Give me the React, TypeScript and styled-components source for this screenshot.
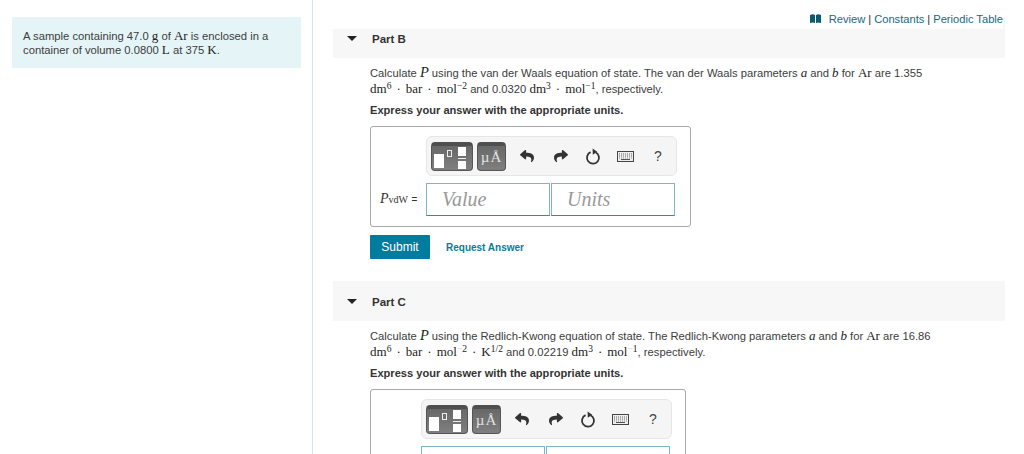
import React from 'react';
import styled, { createGlobalStyle } from 'styled-components';
import { FaReply, FaShare } from 'react-icons/fa';

const GlobalStyle = createGlobalStyle`
  html, body {
    margin: 0;
    height: 100%;
    overflow: hidden;
    background: #fff;
  }
  body {
    font-family: "Liberation Sans", Arial, sans-serif;
    font-size: 11px;
    color: #333;
  }
`;

const Page = styled.div`
  display: flex;
  width: 1024px;
  height: 454px;
  overflow: hidden;
`;

const Sidebar = styled.aside`
  width: 313px;
  height: 100%;
  flex: none;
  box-sizing: border-box;
  padding: 17px 11px 0 12px;
  border-right: 1px solid #d6e4f2;
`;

const InfoBox = styled.div`
  height: 51px;
  box-sizing: border-box;
  padding: 12px 11px;
  background: #e5f4f6;
  font-size: 11.25px;
  line-height: 14px;
  color: #3c3c3c;
`;

const Main = styled.main`
  flex: 1;
  min-width: 0;
  box-sizing: border-box;
  padding: 18px 19px 0 20px;
  position: relative;
`;

const TopLinks = styled.div`
  position: absolute;
  top: 0;
  left: 0;
  right: 21px;
  height: 29px;
  box-sizing: border-box;
  padding-top: 8px;
  background: #fff;
  display: flex;
  justify-content: flex-end;
  align-items: center;
  gap: 3px;
  font-size: 11.15px;
  line-height: 14px;
  color: #333;
`;

const BookIcon = styled.svg`
  width: 11px;
  height: 9px;
  margin-right: 5px;
  color: #0b5a70;
`;

const TopLink = styled.a`
  color: #17697f;
`;

const PartHeader = styled.div`
  height: 40px;
  background: #f7f7f7;
  display: flex;
  align-items: center;
  padding-left: 14px;
  gap: 14px;
`;

const Caret = styled.span`
  width: 0;
  height: 0;
  border-left: 5px solid transparent;
  border-right: 5px solid transparent;
  border-top: 5px solid #222;
`;

const PartTitle = styled.h3`
  margin: 2px 0 0 1px;
  font-size: 11.5px;
  font-weight: 700;
  color: #333;
`;

const PartBody = styled.section`
  padding: 7px 0 0 37px;
`;

const Prompt = styled.p<{ $after?: number }>`
  margin: 0 0 ${p => p.$after ?? 0}px;
  font-size: 11.22px;
  line-height: 16px;
  color: #3c3c3c;
`;

const Instruction = styled.p`
  margin: 6px 0 8px;
  font-size: 11.1px;
  line-height: 15px;
  font-weight: 700;
  color: #333;
`;

const M = styled.span`
  font-family: "Liberation Serif", "Times New Roman", serif;
  font-size: 13px;
  line-height: 0;
  color: #222;
`;

const Mi = styled(M)`
  font-style: italic;
`;

const BigVar = styled(Mi)`
  font-size: 14.5px;
`;

const Dot = styled.span`
  margin: 0 5px;
`;

const Sup = styled.sup`
  font-size: 9.5px;
  line-height: 0;
  vertical-align: 4px;
`;

const FaintMinus = styled.span`
  color: #ccc;
`;

const AnswerBox = styled.div<{ $w: number; $left: number }>`
  width: ${p => p.$w}px;
  box-sizing: border-box;
  border: 1px solid #aaa;
  border-radius: 3px;
  padding: 9px 14px 10px ${p => p.$left}px;
  background: #fff;
`;

const Toolbar = styled.div`
  width: 251px;
  height: 40px;
  box-sizing: border-box;
  display: flex;
  align-items: center;
  padding-left: 4px;
  background: #f5f5f5;
  border: 1px solid #e6e6e6;
  border-radius: 6px;
`;

const ToolButton = styled.div<{ $w: number }>`
  width: ${p => p.$w}px;
  height: 29px;
  flex: none;
  margin-right: 4px;
  box-sizing: border-box;
  border-radius: 4px;
  border: 1px solid #555;
  border-top: 4px solid #4f4f4f;
  background: linear-gradient(#686868, #7f7f7f);
  display: flex;
  align-items: center;
  justify-content: center;
`;

const UnitGlyph = styled.span`
  font-family: "Liberation Serif", serif;
  font-size: 15px;
  color: #e2e2e2;
  letter-spacing: 1px;
`;

const IconSlot = styled.div<{ $w: number }>`
  width: ${p => p.$w}px;
  flex: none;
  display: flex;
  justify-content: center;
  align-items: center;
  color: #333;
`;

const Help = styled.span`
  font-size: 14px;
  color: #444;
`;

const InputRow = styled.div`
  display: flex;
  align-items: center;
  margin-top: 7px;
  position: relative;
`;

const VarLabel = styled.label`
  position: absolute;
  left: -46px;
  top: 8px;
  width: 42px;
  font-family: "Liberation Serif", serif;
  font-size: 14px;
  color: #333;
  white-space: nowrap;
`;

const Sub = styled.span`
  font-size: 10px;
`;

const Equals = styled.span`
  font-family: "Liberation Sans", sans-serif;
  font-size: 10px;
`;

const Field = styled.div`
  width: 125px;
  height: 33px;
  box-sizing: border-box;
  margin-right: 1px;
  padding-left: 15px;
  border: 1px solid #7fb5c6;
  border-bottom-color: #2f8ba6;
  font-family: "Liberation Serif", serif;
  font-style: italic;
  font-size: 20px;
  line-height: 31px;
  color: #999;
`;

const Actions = styled.div`
  display: flex;
  align-items: center;
  gap: 16px;
  margin-top: 8px;
  margin-bottom: 22px;
`;

const SubmitButton = styled.button`
  width: 60px;
  height: 24px;
  padding: 0;
  border: 0;
  border-radius: 1px;
  background: #007c9e;
  color: #fff;
  font-family: inherit;
  font-size: 12px;
`;

const RequestLink = styled.a`
  font-size: 10px;
  font-weight: 700;
  color: #0a7c9c;
`;

const TemplateIcon = () => (
  <svg width="38" height="22" viewBox="0 0 38 22">
    <rect x="1" y="7" width="10" height="14" fill="#fff" />
    <rect x="14.5" y="3.5" width="4" height="6" fill="none" stroke="#eee" />
    <rect x="25" y="0" width="8" height="9" fill="#fff" />
    <rect x="25" y="11" width="8" height="1" fill="#eee" />
    <rect x="25" y="14" width="8" height="8" fill="#fff" />
  </svg>
);

const ResetIcon = () => (
  <svg width="16" height="17" viewBox="0 0 16 17">
    <path d="M5.6 4.2a6 6 0 1 0 5 .1" fill="none" stroke="#333" strokeWidth="1.8" />
    <path d="M7.6 0.6l4.6 3.2-4.4 3z" fill="#333" />
  </svg>
);

const KeyboardIcon = () => (
  <svg width="17" height="11" viewBox="0 0 17 11">
    <rect x="0.5" y="0.5" width="16" height="10" fill="#eee" stroke="#444" />
    <path d="M2 3h13M2 5h13" stroke="#666" strokeDasharray="1 1" />
    <path d="M4 8.5h9" stroke="#555" />
    <path d="M2 7h13" stroke="#888" strokeDasharray="1 1" />
  </svg>
);

const AnswerTools = () => (
  <Toolbar>
    <ToolButton $w={42}>
      <TemplateIcon />
    </ToolButton>
    <ToolButton $w={29}>
      <UnitGlyph>µÅ</UnitGlyph>
    </ToolButton>
    <IconSlot $w={34}>
      <FaReply size={14} />
    </IconSlot>
    <IconSlot $w={33}>
      <FaShare size={14} />
    </IconSlot>
    <IconSlot $w={32}>
      <ResetIcon />
    </IconSlot>
    <IconSlot $w={32}>
      <KeyboardIcon />
    </IconSlot>
    <IconSlot $w={34}>
      <Help>?</Help>
    </IconSlot>
  </Toolbar>
);

export default function App() {
  return (
    <>
      <GlobalStyle />
      <Page>
        <Sidebar>
          <InfoBox>
            A sample containing 47.0 <M>g</M> of <M>Ar</M> is enclosed in a
            <br />
            container of volume 0.0800 <M>L</M> at 375 <M>K</M>.
          </InfoBox>
        </Sidebar>
        <Main>
          <TopLinks>
            <BookIcon viewBox="0 0 11 9">
              <path d="M0 1q3-1.5 5 0v8q-2-1-5 0zM6 1q2-1.5 5 0v8q-3-1-5 0z" fill="currentColor" />
            </BookIcon>
            <TopLink>Review</TopLink> | <TopLink>Constants</TopLink> | <TopLink>Periodic Table</TopLink>
          </TopLinks>

          <PartHeader>
            <Caret />
            <PartTitle>Part B</PartTitle>
          </PartHeader>
          <PartBody>
            <Prompt>
              Calculate <BigVar>P</BigVar> using the van der Waals equation of state. The van der Waals parameters <Mi>a</Mi> and <Mi>b</Mi> for <M>Ar</M> are 1.355
              <br />
              <M>dm<Sup>6</Sup><Dot>·</Dot>bar<Dot>·</Dot>mol<Sup>−2</Sup></M> and 0.0320 <M>dm<Sup>3</Sup><Dot>·</Dot>mol<Sup>−1</Sup></M>, respectively.
            </Prompt>
            <Instruction>Express your answer with the appropriate units.</Instruction>
            <AnswerBox $w={321} $left={55}>
              <AnswerTools />
              <InputRow>
                <VarLabel><i>P</i><Sub>vdW</Sub> <Equals>=</Equals></VarLabel>
                <Field>Value</Field>
                <Field>Units</Field>
              </InputRow>
            </AnswerBox>
            <Actions>
              <SubmitButton>Submit</SubmitButton>
              <RequestLink>Request Answer</RequestLink>
            </Actions>
          </PartBody>

          <PartHeader>
            <Caret />
            <PartTitle>Part C</PartTitle>
          </PartHeader>
          <PartBody>
            <Prompt $after={1}>
              Calculate <BigVar>P</BigVar> using the Redlich-Kwong equation of state. The Redlich-Kwong parameters <Mi>a</Mi> and <Mi>b</Mi> for <M>Ar</M> are 16.86
              <br />
              <M>dm<Sup>6</Sup><Dot>·</Dot>bar<Dot>·</Dot>mol<Sup><FaintMinus>−</FaintMinus>2</Sup><Dot>·</Dot>K<Sup>1/2</Sup></M> and 0.02219 <M>dm<Sup>3</Sup><Dot>·</Dot>mol<Sup><FaintMinus>−</FaintMinus>1</Sup></M>, respectively.
            </Prompt>
            <Instruction>Express your answer with the appropriate units.</Instruction>
            <AnswerBox $w={316} $left={50}>
              <AnswerTools />
              <InputRow>
                <Field />
                <Field />
              </InputRow>
            </AnswerBox>
          </PartBody>
        </Main>
      </Page>
    </>
  );
}
